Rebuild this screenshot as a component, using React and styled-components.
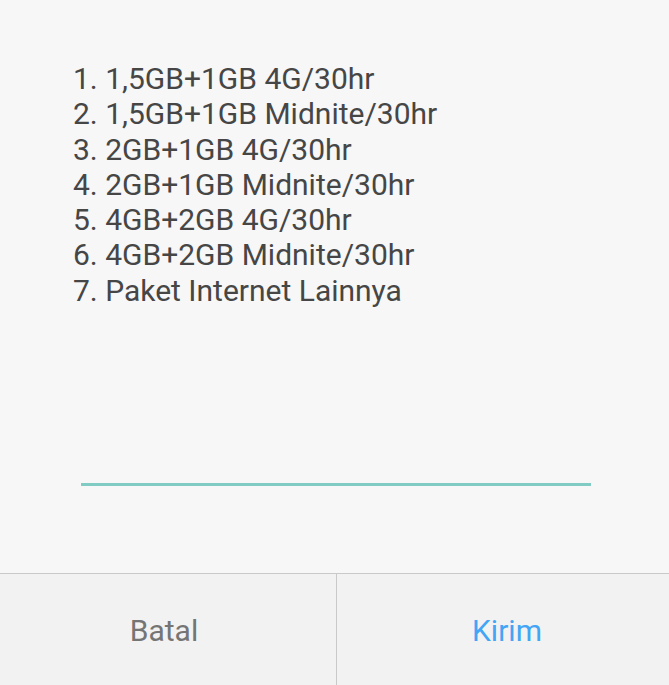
import styled, { createGlobalStyle } from "styled-components";

const GlobalStyle = createGlobalStyle`
	html, body {
		margin: 0;
		padding: 0;
		background: #f7f7f7;
	}
	body {
		font-family: Roboto, "Liberation Sans", sans-serif;
	}
`;

const Dialog = styled.div`
	display: flex;
	flex-direction: column;
	width: 669px;
	height: 685px;
	background: #f7f7f7;
`;

const Body = styled.div`
	flex: 1;
	display: flex;
	flex-direction: column;
	padding: 61px 78px 0 73px;
`;

const Menu = styled.div`
	font-size: 30px;
	line-height: 35.3px;
	color: #464646;
	white-space: nowrap;
`;

const Input = styled.div`
	margin: 175px 0 0 8px;
	height: 3px;
	width: 510px;
	background: #80cbc4;
`;

const Footer = styled.div`
	display: grid;
	grid-template-columns: 336px 1fr;
	height: 111px;
	border-top: 1px solid #c9c9c9;
	background: #f2f2f2;
`;

const Button = styled.div`
	display: flex;
	align-items: center;
	justify-content: center;
	padding: ${(p) => (p.$primary ? "2px 0 0 8px" : "2px 8px 0 0")};
	font-size: 30px;
	color: ${(p) => (p.$primary ? "#42a5f5" : "#757575")};
	& + & {
		border-left: 1px solid #c9c9c9;
	}
`;

const items = [
	"1. 1,5GB+1GB 4G/30hr",
	"2. 1,5GB+1GB Midnite/30hr",
	"3. 2GB+1GB 4G/30hr",
	"4. 2GB+1GB Midnite/30hr",
	"5. 4GB+2GB 4G/30hr",
	"6. 4GB+2GB Midnite/30hr",
	"7. Paket Internet Lainnya",
];

const App = () => {
	return (
		<>
			<GlobalStyle />
			<Dialog>
				<Body>
					<Menu>
						{items.map((item) => (
							<div key={item}>{item}</div>
						))}
					</Menu>
					<Input />
				</Body>
				<Footer>
					<Button>Batal</Button>
					<Button $primary>Kirim</Button>
				</Footer>
			</Dialog>
		</>
	);
};

export default App;
